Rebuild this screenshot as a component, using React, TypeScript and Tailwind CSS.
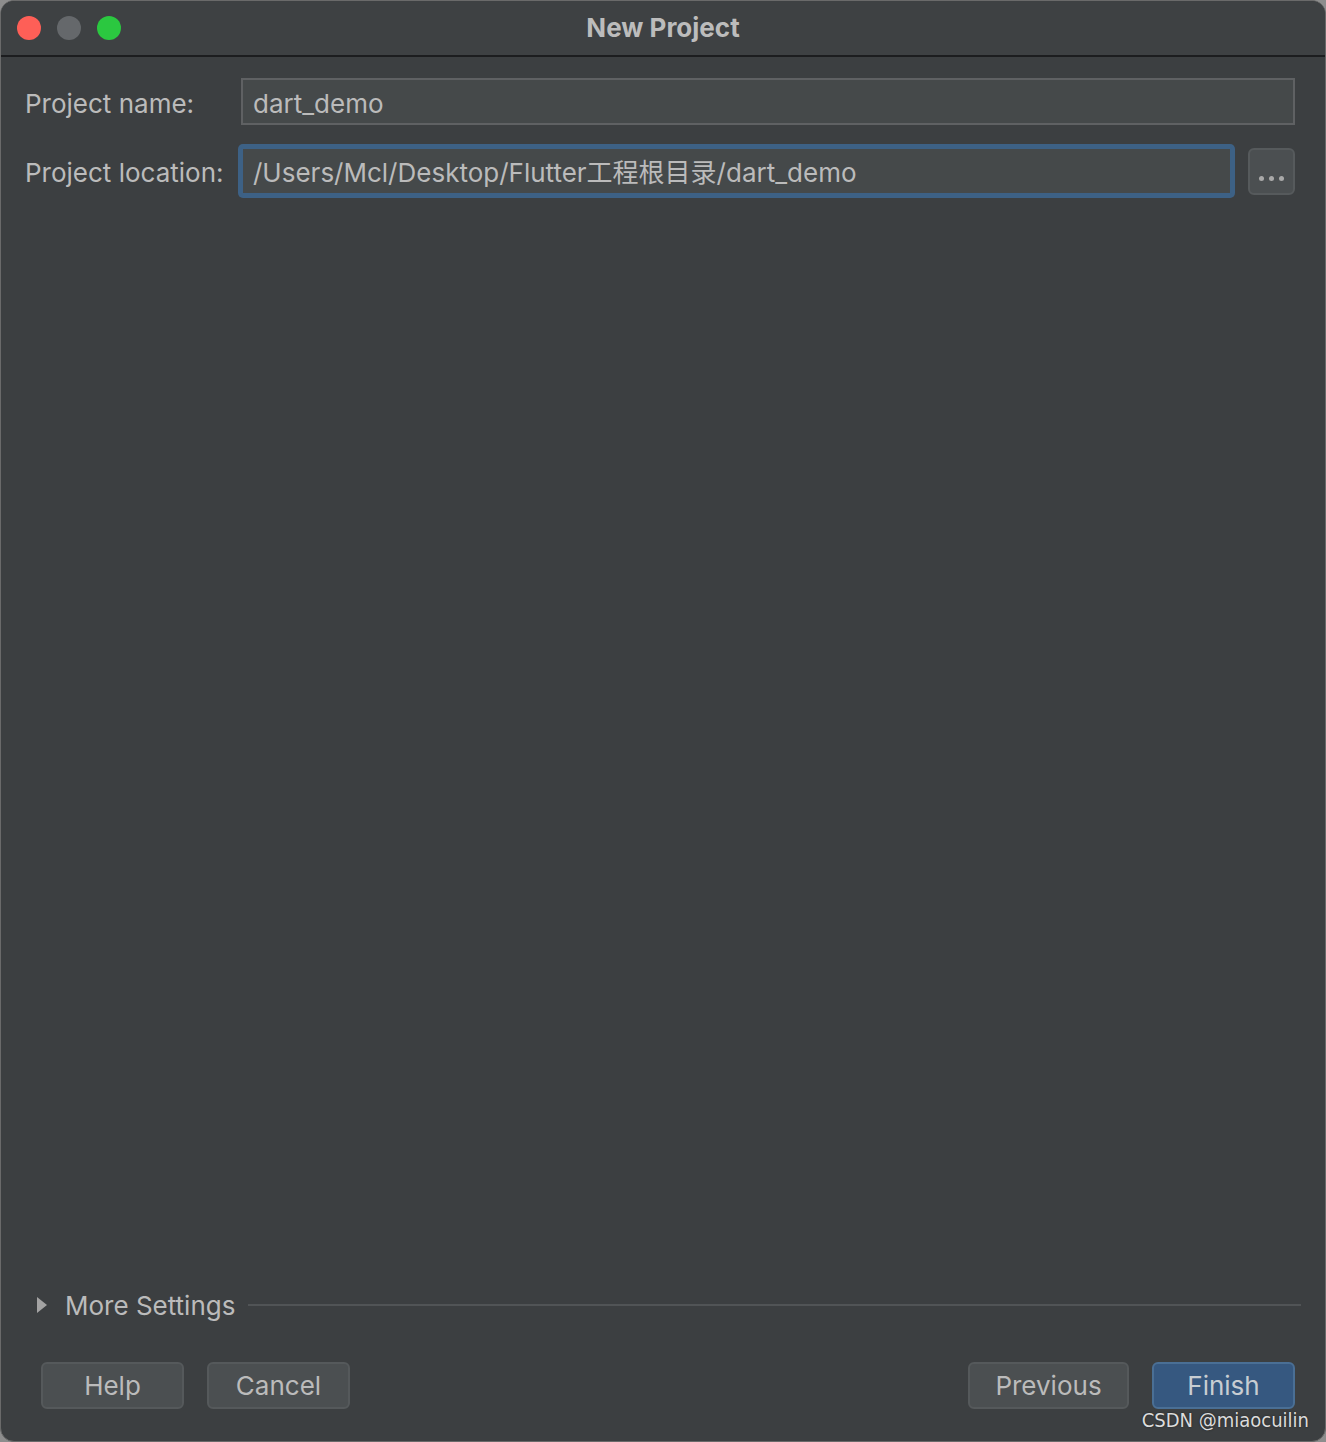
import React from 'react';

const font = { fontFamily: '"Inter", "Noto Sans CJK SC", sans-serif' };

function DialogButton({ label, primary, width }: { label: string; primary?: boolean; width: string }) {
  return (
    <button
      className={
        primary
          ? `${width} h-[47px] rounded-[6px] border-2 border-[#4a6f95] bg-[#365880] text-[26px] text-[#c8cdd2]`
          : `${width} h-[47px] rounded-[6px] border-2 border-[#55595b] bg-[#4b4f51] text-[26px] text-[#bbbbbb]`
      }
    >
      {label}
    </button>
  );
}

export default function App() {
  return (
    <div className="w-[1326px] h-[1442px] bg-[#8d8d8d]" style={font}>
      <div className="relative w-full h-full flex flex-col rounded-[14px] border border-[#6a6a6a] bg-[#3c3f41] overflow-hidden">
        {/* title bar */}
        <div className="relative h-[56px] shrink-0 flex items-center border-b-2 border-[#1c1d1f] bg-[#3e4143]">
          <div className="flex items-center gap-[16px] pl-[16px]">
            <span className="w-[24px] h-[24px] rounded-full bg-[#fe5f57]" />
            <span className="w-[24px] h-[24px] rounded-full bg-[#65686b]" />
            <span className="w-[24px] h-[24px] rounded-full bg-[#2bc840]" />
          </div>
          <div className="absolute inset-0 flex items-center justify-center pb-[2px] text-[26px] font-bold text-[#bcbcbc]">
            New Project
          </div>
        </div>

        {/* body */}
        <div className="flex-1 flex flex-col pt-[21px]">
          <div className="flex items-center h-[47px] pl-[24px] pr-[30px]">
            <div className="w-[216px] text-[26px] text-[#bbbbbb] pt-[3px]">Project name:</div>
            <div className="flex-1 h-[47px] flex items-center border-2 border-[#5f6163] bg-[#45494a] px-[10px] pt-[3px] text-[26px] text-[#bbbbbb]">
              dart_demo
            </div>
          </div>

          <div className="flex items-center h-[48px] mt-[22px] pl-[24px] pr-[30px]">
            <div className="w-[216px] text-[26px] text-[#bbbbbb] pt-[2px]">Project location:</div>
            <div className="flex-1 h-[48px] flex items-center border-2 border-[#3d6185] bg-[#45494a] px-[10px] pt-[2px] text-[26px] text-[#bbbbbb] rounded-[2px] ring-[3px] ring-[#3d6185]">
              /Users/Mcl/Desktop/Flutter工程根目录/dart_demo
            </div>
            <div className="ml-[16px] w-[47px] h-[47px] flex items-end justify-center pb-[12px] gap-[5px] rounded-[6px] border-2 border-[#565a5c] bg-[#4b4f51]">
              <span className="w-[5px] h-[5px] rounded-full bg-[#a9a9a9]" />
              <span className="w-[5px] h-[5px] rounded-full bg-[#a9a9a9]" />
              <span className="w-[5px] h-[5px] rounded-full bg-[#a9a9a9]" />
            </div>
          </div>

          <div className="flex-1" />

          <div className="flex items-center h-[30px] pl-[36px] pr-[24px]">
            <svg width="10" height="16" viewBox="0 0 10 16">
              <path d="M0 0 L10 8 L0 16 Z" fill="#a3a3a3" />
            </svg>
            <span className="ml-[18px] text-[26px] text-[#bbbbbb]">More Settings</span>
            <div className="flex-1 ml-[13px] h-[2px] bg-[#515456]" />
          </div>

          <div className="flex items-center mt-[42px] mb-[32px] pl-[40px] pr-[30px]">
            <DialogButton label="Help" width="w-[143px]" />
            <div className="ml-[23px]">
              <DialogButton label="Cancel" width="w-[143px]" />
            </div>
            <div className="flex-1" />
            <DialogButton label="Previous" width="w-[161px]" />
            <div className="ml-[23px]">
              <DialogButton label="Finish" primary width="w-[143px]" />
            </div>
          </div>
        </div>

        <div
          className="absolute right-[16px] bottom-[6px] text-[20px] text-[#dcdcdc]"
          style={{ fontFamily: '"DejaVu Sans Condensed", "DejaVu Sans", sans-serif', fontStretch: 'condensed', textShadow: '0 0 2px #222' }}
        >
          CSDN @miaocuilin
        </div>
      </div>
    </div>
  );
}
